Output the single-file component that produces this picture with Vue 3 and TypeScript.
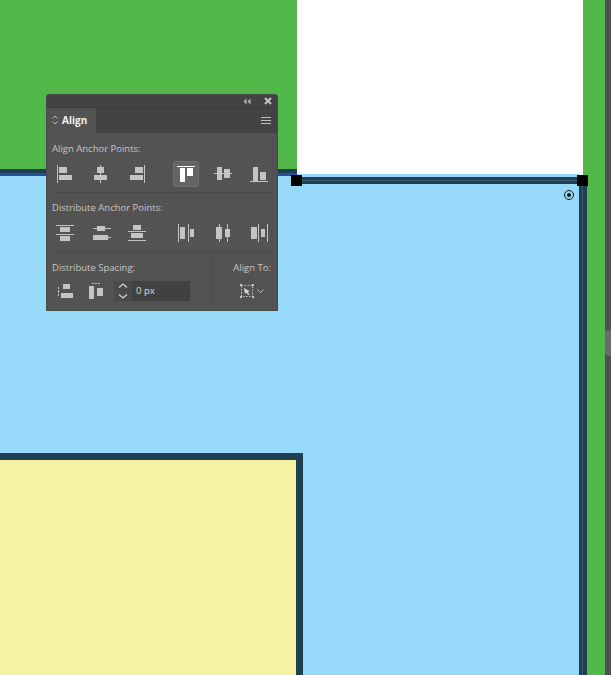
<script setup lang="ts">
interface Bar { x: number; y: number; w: number; h: number }
interface Icon { id: string; bars: Bar[]; active?: boolean }

const bar = (x: number, y: number, w: number, h: number): Bar => ({ x, y, w, h })

const alignIcons: Icon[] = [
  { id: 'left', bars: [bar(5, 3, 1, 18), bar(7, 5, 8, 6), bar(7, 13, 13, 5)] },
  { id: 'hcenter', bars: [bar(12, 3, 1, 18), bar(9, 5, 7, 6), bar(6, 13, 13, 5)] },
  { id: 'right', bars: [bar(19, 3, 1, 18), bar(10, 5, 8, 6), bar(5, 13, 13, 5)] },
  { id: 'top', active: true, bars: [bar(3, 4, 18, 1), bar(6, 6, 5, 14), bar(13, 6, 6, 8)] },
  { id: 'vcenter', bars: [bar(3, 11, 18, 1), bar(6, 5, 5, 13), bar(13, 7, 6, 9)] },
  { id: 'bottom', bars: [bar(3, 19, 18, 1), bar(6, 5, 5, 14), bar(13, 10, 6, 8)] },
]

const distributeIcons: Icon[] = [
  { id: 'd-top', bars: [bar(4, 4, 18, 1), bar(8, 6, 10, 5), bar(4, 13, 18, 1), bar(8, 15, 10, 5)] },
  { id: 'd-vc', bars: [bar(5, 7, 18, 1), bar(9, 5, 8, 5), bar(5, 16, 18, 1), bar(5, 14, 15, 5)] },
  { id: 'd-bottom', bars: [bar(8, 4, 8, 5), bar(3, 10, 18, 1), bar(6, 12, 12, 5), bar(3, 19, 18, 1)] },
  { id: 'd-left', bars: [bar(4, 3, 1, 18), bar(6, 6, 5, 12), bar(14, 3, 1, 18), bar(16, 8, 4, 8)] },
  { id: 'd-hc', bars: [bar(5, 6, 6, 12), bar(8, 3, 1, 18), bar(14, 8, 5, 8), bar(16, 3, 1, 18)] },
  { id: 'd-right', bars: [bar(4, 6, 6, 12), bar(11, 3, 1, 18), bar(14, 8, 4, 8), bar(20, 3, 1, 18)] },
]
</script>

<template>
  <div class="canvas">
    <div class="white-shape"></div>
    <div class="blue-shape"></div>
    <div class="left-edge"></div>
    <div class="top-edge"></div>
    <div class="right-edge"></div>
    <div class="yellow-shape"></div>
    <div class="strip"><span class="strip-thumb"></span></div>

    <span class="handle handle-a"></span>
    <span class="handle handle-b"></span>
    <span class="center-mark"></span>

    <section class="panel">
      <header class="panel-bar">
        <svg width="8" height="7" viewBox="0 0 8 7" class="collapse">
          <path d="M3.5 0.5 L0.5 3.5 L3.5 6.5 Z M7.5 0.5 L4.5 3.5 L7.5 6.5 Z" fill="#b4b4b4" />
        </svg>
        <svg width="8" height="8" viewBox="0 0 8 8">
          <path d="M1 1 L7 7 M7 1 L1 7" stroke="#c4c4c4" stroke-width="2" />
        </svg>
      </header>

      <div class="tabs">
        <div class="tab">
          <svg width="6" height="10" viewBox="0 0 6 10">
            <path d="M0.7 3.5 L3 1 L5.3 3.5 M0.7 6.5 L3 9 L5.3 6.5" fill="none" stroke="#bdbdbd" />
          </svg>
          <span>Align</span>
        </div>
        <svg class="menu" width="10" height="8" viewBox="0 0 10 8">
          <path d="M0 0.5 H10 M0 3.5 H10 M0 6.5 H10" stroke="#c0c0c0" />
        </svg>
      </div>

      <div class="section section-align">
        <h3>Align Anchor Points:</h3>
        <div class="icons">
          <button v-for="icon in alignIcons" :key="icon.id" class="icon" :class="{ active: icon.active }">
            <svg width="24" height="24" viewBox="0 0 24 24">
              <rect v-for="(b, i) in icon.bars" :key="i" :x="b.x" :y="b.y" :width="b.w" :height="b.h" />
            </svg>
          </button>
        </div>
      </div>

      <div class="section section-distribute">
        <h3>Distribute Anchor Points:</h3>
        <div class="icons">
          <button v-for="icon in distributeIcons" :key="icon.id" class="icon">
            <svg width="24" height="24" viewBox="0 0 24 24">
              <rect v-for="(b, i) in icon.bars" :key="i" :x="b.x" :y="b.y" :width="b.w" :height="b.h" />
            </svg>
          </button>
        </div>
      </div>

      <div class="section-bottom">
        <div class="spacing">
          <h3>Distribute Spacing:</h3>
          <div class="spacing-row">
            <button class="icon">
              <svg width="24" height="24" viewBox="0 0 24 24">
                <rect x="6" y="8" width="1" height="2" />
                <rect x="6" y="11" width="1" height="3" />
                <rect x="6" y="15" width="1" height="2" />
                <rect x="11" y="5" width="7" height="5" />
                <rect x="9" y="14" width="12" height="5" />
              </svg>
            </button>
            <button class="icon icon-second">
              <svg width="24" height="24" viewBox="0 0 24 24">
                <rect x="9" y="4" width="2" height="1" />
                <rect x="12" y="4" width="2" height="1" />
                <rect x="15" y="4" width="2" height="1" />
                <rect x="6" y="7" width="5" height="13" />
                <rect x="14" y="9" width="6" height="8" />
              </svg>
            </button>
            <div class="stepper">
              <div class="spin">
                <svg width="10" height="16" viewBox="0 0 10 16">
                  <path d="M1 4.5 L5 1 L9 4.5 M1 11.5 L5 15 L9 11.5" fill="none" stroke="#d4d4d4" stroke-width="1.2" />
                </svg>
              </div>
              <div class="value">0 px</div>
            </div>
          </div>
        </div>
        <div class="align-to">
          <h3>Align To:</h3>
          <div class="align-target">
            <svg width="14" height="14" viewBox="0 0 14 14">
              <rect x="1.5" y="1.5" width="11" height="11" fill="none" stroke="#c8c8c8" stroke-dasharray="1.5 1.5" />
              <rect x="0" y="0" width="2" height="2" fill="#c8c8c8" />
              <rect x="12" y="0" width="2" height="2" fill="#c8c8c8" />
              <rect x="0" y="12" width="2" height="2" fill="#c8c8c8" />
              <rect x="12" y="12" width="2" height="2" fill="#c8c8c8" />
              <path d="M4 4 L10 7.5 L7.5 8 L9.5 10.5 L8 11 L6.5 8.5 L5 10 Z" fill="#d8d8d8" />
            </svg>
            <svg width="7" height="4" viewBox="0 0 7 4">
              <path d="M0.5 0.5 L3.5 3.5 L6.5 0.5" fill="none" stroke="#c4c4c4" />
            </svg>
          </div>
        </div>
      </div>
    </section>
  </div>
</template>

<style>
html,
body {
  margin: 0;
  background: #52b84a;
}
</style>

<style scoped>
/* The artboard is a free canvas: shapes sit at their own coordinates */
.canvas {
  position: relative;
  width: 611px;
  height: 675px;
  overflow: hidden;
  background: #52b84a;
  font-family: "Open Sans", "Liberation Sans", sans-serif;
}
.white-shape {
  position: absolute;
  left: 297px;
  top: 0;
  width: 286px;
  height: 175px;
  background: #fff;
}
.blue-shape {
  position: absolute;
  left: 0;
  top: 174px;
  width: 580px;
  height: 501px;
  background: #97d9f8;
}
.left-edge {
  position: absolute;
  left: 0;
  top: 169px;
  width: 297px;
  height: 4px;
  background: #1f3f52;
  border-bottom: 3px solid #27509c;
}
.top-edge {
  position: absolute;
  left: 297px;
  top: 177px;
  width: 286px;
  height: 1px;
  background: #3d5f70;
  border-top: 3px solid #1f3f52;
  border-bottom: 3px solid #1f3f52;
}
.right-edge {
  position: absolute;
  left: 579px;
  top: 177px;
  width: 1px;
  height: 498px;
  background: #3d5f70;
  border-left: 3px solid #1f3f52;
  border-right: 4px solid #1f3f52;
}
.yellow-shape {
  position: absolute;
  left: 0;
  top: 453px;
  width: 296px;
  height: 222px;
  background: #f6f3a5;
  border-top: 7px solid #1f3f52;
  border-right: 7px solid #1f3f52;
}
.strip {
  position: absolute;
  left: 605px;
  top: 0;
  width: 6px;
  height: 675px;
  background: #505050;
}
.strip-thumb {
  position: absolute;
  left: 0;
  top: 330px;
  width: 8px;
  height: 26px;
  border-radius: 4px;
  background: #6b6b6b;
}
.handle {
  position: absolute;
  top: 175px;
  width: 11px;
  height: 11px;
  background: #000;
}
.handle-a {
  left: 291px;
}
.handle-b {
  left: 577px;
}
.center-mark {
  position: absolute;
  left: 565px;
  top: 191px;
  width: 4px;
  height: 4px;
  border: 2px solid #97d9f8;
  outline: 1px solid #1a1a1a;
  background: #111;
  border-radius: 50%;
}

.panel {
  position: absolute;
  left: 46px;
  top: 94px;
  width: 232px;
  height: 217px;
  box-sizing: border-box;
  display: flex;
  flex-direction: column;
  border: 1px solid #474747;
  border-radius: 3px 3px 0 0;
  background: #535353;
  color: #c6c6c6;
}
.panel-bar {
  height: 12px;
  flex: none;
  display: flex;
  align-items: center;
  justify-content: flex-end;
  gap: 13px;
  padding-right: 5px;
  background: #434343;
}
.tabs {
  height: 26px;
  flex: none;
  display: flex;
  align-items: center;
  justify-content: space-between;
  padding-right: 6px;
  background: #434343;
  border-top: 1px solid #3c3c3c;
  box-sizing: border-box;
}
.tab {
  height: 25px;
  width: 49px;
  box-sizing: border-box;
  display: flex;
  align-items: center;
  gap: 4px;
  padding: 0 0 2px 5px;
  background: #535353;
  color: #f2f2f2;
  font-size: 10px;
  font-weight: 700;
}
.section {
  margin: 0 5px;
  padding: 9px 0 0;
}
.section-align {
  height: 60px;
  box-sizing: border-box;
  border-bottom: 1px solid #4a4a4a;
}
.section-distribute {
  height: 59px;
  box-sizing: border-box;
  padding-top: 8px;
  border-bottom: 1px solid #4a4a4a;
}
h3 {
  margin: 0;
  font-size: 9.5px;
  font-weight: 400;
  line-height: 13px;
  white-space: nowrap;
}
.icons {
  display: flex;
  gap: 12.4px;
  margin-top: 7px;
}
.icon {
  flex: none;
  width: 24px;
  height: 24px;
  padding: 0;
  border: 0;
  background: none;
  display: block;
  position: relative;
}
.icon svg {
  display: block;
  fill: #c4c4c4;
}
.icon:nth-child(4) {
  margin-left: 13px;
}
.icon.active {
  border-radius: 2px;
  background: #646464;
  box-shadow: 0 0 0 1px #6f6f6f;
}
.icon.active svg {
  fill: #fff;
}
.section-bottom {
  flex: 1;
  display: flex;
  padding: 0 5px;
  position: relative;
}
.spacing {
  width: 160px;
  padding-top: 9px;
}
.spacing-row {
  display: flex;
  align-items: center;
  margin-top: 5px;
}
.icon-second {
  margin-left: 7px;
}
.stepper {
  width: 76px;
  height: 20px;
  margin-left: 7px;
  display: flex;
  background: #4a4a4a;
}
.spin {
  width: 18px;
  display: flex;
  align-items: center;
  justify-content: center;
}
.value {
  flex: 1;
  padding-left: 4px;
  background: #414141;
  font-size: 9.5px;
  line-height: 20px;
  color: #dcdcdc;
}
.align-to {
  flex: 1;
  margin-top: 5px;
  margin-bottom: 5px;
  border-left: 1px solid #4a4a4a;
  padding-top: 4px;
  text-align: right;
}
.align-to h3 {
  margin-right: 1px;
}
.align-target {
  display: flex;
  align-items: center;
  justify-content: flex-end;
  gap: 3px;
  margin-top: 10px;
  margin-right: 8px;
}
</style>
